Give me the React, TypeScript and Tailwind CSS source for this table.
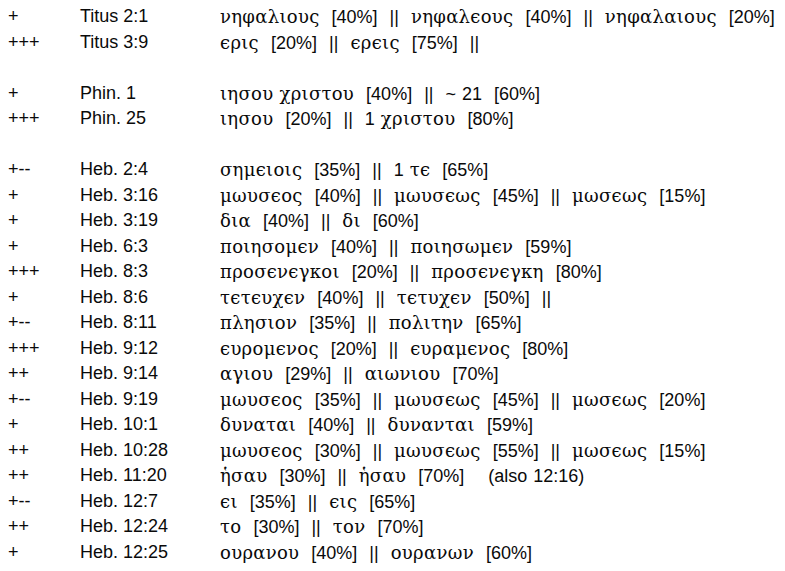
import type { ReactNode } from 'react';

type Row = { mark: string; ref: string; text: string } | null;

// {…} marks a run that keeps ordinary word spacing
const ROWS: Row[] = [
  { mark: '+', ref: 'Titus 2:1', text: 'νηφαλιους [40%] || νηφαλϵους [40%] || νηφαλαιους [20%]' },
  { mark: '+++', ref: 'Titus 3:9', text: 'ϵρις [20%] || ϵρϵις [75%] ||' },
  null,
  { mark: '+', ref: 'Phin. 1', text: '{ιησου χριστου} [40%] || {~ 21} [60%]' },
  { mark: '+++', ref: 'Phin. 25', text: 'ιησου [20%] || {1 χριστου} [80%]' },
  null,
  { mark: '+--', ref: 'Heb. 2:4', text: 'σημϵιοις [35%] || {1 τϵ} [65%]' },
  { mark: '+', ref: 'Heb. 3:16', text: 'μωυσϵος [40%] || μωυσϵως [45%] || μωσϵως [15%]' },
  { mark: '+', ref: 'Heb. 3:19', text: 'δια [40%] || δι [60%]' },
  { mark: '+', ref: 'Heb. 6:3', text: 'ποιησομϵν [40%] || ποιησωμϵν [59%]' },
  { mark: '+++', ref: 'Heb. 8:3', text: 'προσϵνϵγκοι [20%] || προσϵνϵγκη [80%]' },
  { mark: '+', ref: 'Heb. 8:6', text: 'τϵτϵυχϵν [40%] || τϵτυχϵν [50%] ||' },
  { mark: '+--', ref: 'Heb. 8:11', text: 'πλησιον [35%] || πολιτην [65%]' },
  { mark: '+++', ref: 'Heb. 9:12', text: 'ϵυρομϵνος [20%] || ϵυραμϵνος [80%]' },
  { mark: '++', ref: 'Heb. 9:14', text: 'αγιου [29%] || αιωνιου [70%]' },
  { mark: '+--', ref: 'Heb. 9:19', text: 'μωυσϵος [35%] || μωυσϵως [45%] || μωσϵως [20%]' },
  { mark: '+', ref: 'Heb. 10:1', text: 'δυναται [40%] || δυνανται [59%]' },
  { mark: '++', ref: 'Heb. 10:28', text: 'μωυσϵος [30%] || μωυσϵως [55%] || μωσϵως [15%]' },
  { mark: '++', ref: 'Heb. 11:20', text: 'ἡσαυ [30%] || ἡσαυ [70%]  {(also 12:16)}' },
  { mark: '+--', ref: 'Heb. 12:7', text: 'ϵι [35%] || ϵις [65%]' },
  { mark: '++', ref: 'Heb. 12:24', text: 'το [30%] || τον [70%]' },
  { mark: '+', ref: 'Heb. 12:25', text: 'ουρανου [40%] || ουρανων [60%]' },
];

const GREEK = /([\u0370-\u03FF\u1F00-\u1FFF]+)/;

function Words({ text }: { text: string }) {
  return (
    <>
      {text.split(GREEK).map((p, i) =>
        i % 2 === 1 ? (
          <span key={i} className="font-['DejaVu_Serif',serif] tracking-[0.3px]">{p}</span>
        ) : (
          <span key={i}>{p.replace(/ /g, '\u00a0')}</span>
        )
      )}
    </>
  );
}

function Variants({ text }: { text: string }) {
  const parts: ReactNode[] = text.split(/(\{[^}]*\})/).map((p, i) =>
    p.startsWith('{') ? (
      <span key={i} className="[word-spacing:1px]"><Words text={p.slice(1, -1)} /></span>
    ) : (
      <Words key={i} text={p} />
    )
  );
  return <div className="[word-spacing:7px]">{parts}</div>;
}

export default function App() {
  return (
    <div className="min-h-[571px] w-[785px] bg-white pt-1 pl-2 font-['Liberation_Sans',Arial,sans-serif] text-[18px] leading-[25.5px] text-[#0a0a0a]">
      {ROWS.map((r, i) =>
        r ? (
          <div key={i} className="flex h-[25.5px] whitespace-nowrap">
            <div className="w-[72px]">{r.mark}</div>
            <div className="w-[140px]">{r.ref}</div>
            <Variants text={r.text} />
          </div>
        ) : (
          <div key={i} className="h-[25.5px]" />
        )
      )}
    </div>
  );
}
